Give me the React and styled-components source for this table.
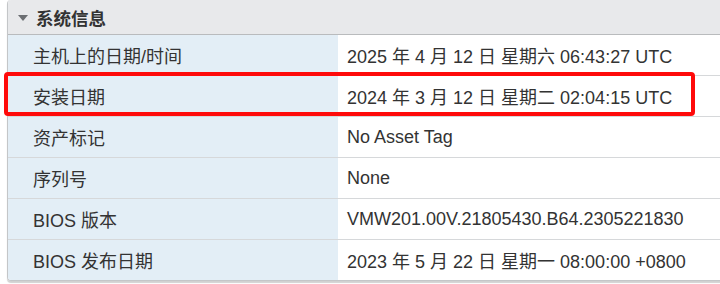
import React from "react";
import styled, { createGlobalStyle } from "styled-components";

const Global = createGlobalStyle`
  body {
    margin: 0;
    background: #ffffff;
    font-family: "Liberation Sans", Arial, "Noto Sans CJK SC", sans-serif;
    color: #333;
    overflow: hidden;
  }
`;

const Page = styled.div`
  position: relative;
  width: 720px;
  height: 284px;
  overflow: hidden;
`;

const Panel = styled.div`
  margin-left: 7px;
  width: 760px;
  border: 1px solid #c4c6c8;
  border-top: none;
  border-radius: 4px 0 0 4px;
  box-shadow: 0 2px 1px rgba(0, 0, 0, 0.18);
  overflow: hidden;
`;

const Header = styled.div`
  display: flex;
  align-items: center;
  gap: 8px;
  height: 34px;
  padding-left: 10px;
  background: #e8e9eb;
  border-bottom: 1px solid #b9bbbd;
  font-size: 17.5px;
  font-weight: bold;
  color: #333;
`;

const Caret = styled.span`
  width: 0;
  height: 0;
  border-left: 5px solid transparent;
  border-right: 5px solid transparent;
  border-top: 6px solid #6b6e72;
  margin-top: 1px;
`;

const Row = styled.div`
  display: grid;
  grid-template-columns: 330px 1fr;
  height: 40px;
  border-top: ${(p) => (p.first ? "none" : "1px solid #d6d8da")};
  font-size: 18px;
`;

const Label = styled.div`
  display: flex;
  align-items: center;
  padding-left: 25px;
  background: #e3eef6;
`;

const Value = styled.div`
  display: flex;
  align-items: center;
  padding-left: 9px;
  background: #ffffff;
`;

const Highlight = styled.div`
  position: absolute;
  left: 4px;
  top: 72px;
  width: 683px;
  height: 36px;
  border: 4px solid #ff0a0a;
  border-radius: 4px;
  pointer-events: none;
`;

const rows = [
  ["主机上的日期/时间", "2025 年 4 月 12 日 星期六 06:43:27 UTC"],
  ["安装日期", "2024 年 3 月 12 日 星期二 02:04:15 UTC"],
  ["资产标记", "No Asset Tag"],
  ["序列号", "None"],
  ["BIOS 版本", "VMW201.00V.21805430.B64.2305221830"],
  ["BIOS 发布日期", "2023 年 5 月 22 日 星期一 08:00:00 +0800"],
];

export default function App() {
  return (
    <Page>
      <Global />
      <Panel>
        <Header>
          <Caret />
          系统信息
        </Header>
        {rows.map(([k, v], i) => (
          <Row key={k} first={i === 0}>
            <Label>{k}</Label>
            <Value>{v}</Value>
          </Row>
        ))}
      </Panel>
      <Highlight />
    </Page>
  );
}
